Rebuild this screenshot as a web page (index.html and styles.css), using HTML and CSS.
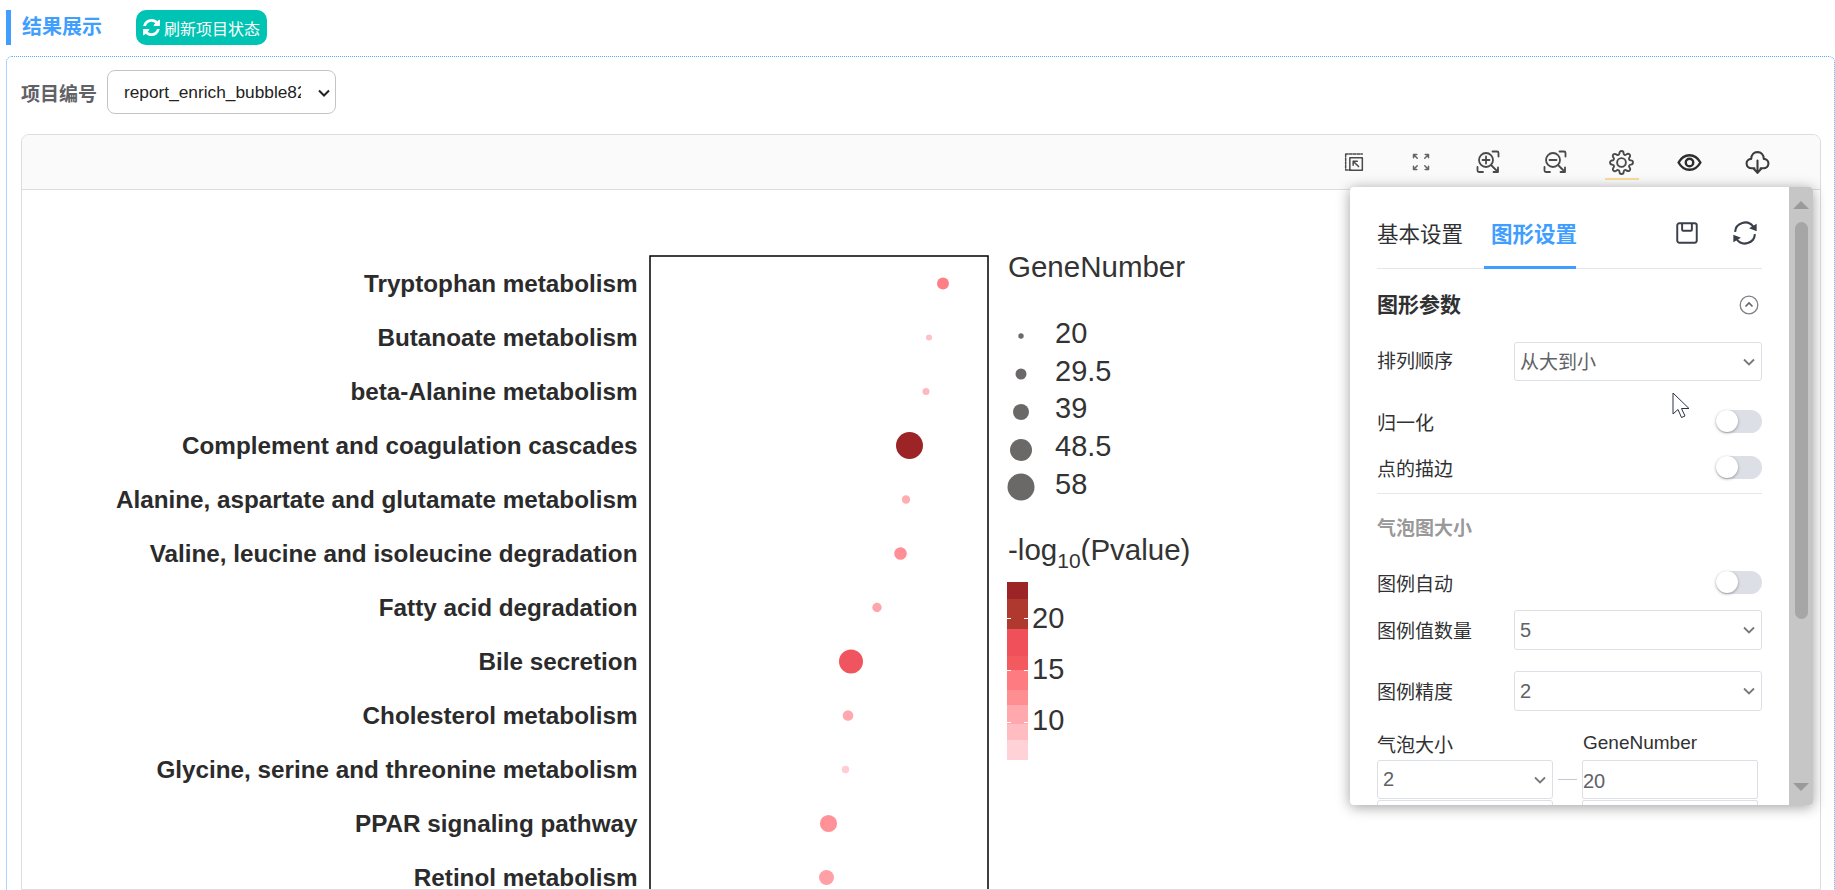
FILE: index.html
```html
<!DOCTYPE html>
<html lang="zh-CN">
<head>
<meta charset="utf-8">
<title>结果展示</title>
<link rel="stylesheet" href="styles.css">
</head>
<body>
<div class="page">
  <div class="title-row">
    <div class="title">结果展示</div>
    <button class="refresh">
      <svg class="refresh-icon" viewBox="0 0 1536 1536"><path fill="#fff" d="M1511 928q0 5-1 7-64 268-268 434.500t-478 166.500q-146 0-282.500-55t-243.500-157l-129 129q-19 19-45 19t-45-19-19-45v-448q0-26 19-45t45-19h448q26 0 45 19t19 45-19 45l-137 137q71 66 161 102t187 36q134 0 250-65t186-179q11-17 53-117 8-23 30-23h192q13 0 22.500 9.500t9.500 22.500zm25-800v448q0 26-19 45t-45 19h-448q-26 0-45-19t-19-45 19-45l138-138q-148-137-349-137-134 0-250 65t-186 179q-11 17-53 117-8 23-30 23h-199q-13 0-22.500-9.500t-9.500-22.500v-7q65-268 270-434.500t480-166.500q146 0 284 55.500t245 156.500l130-129q19-19 45-19t45 19 19 45z"/></svg>
      <span>刷新项目状态</span>
    </button>
  </div>

  <div class="panel">
    <div class="filter-row">
      <label class="filter-label">项目编号</label>
      <div class="filter-box">
        <select class="filter-select"><option>report_enrich_bubble82</option></select>
        <svg class="filter-chev" viewBox="0 0 12 8"><path d="M1 1.500l5 5 5-5"/></svg>
      </div>
    </div>

    <div class="card">
      <div class="toolbar">
        <div class="tool">
          <svg class="icon" viewBox="0 0 24 24"><path class="ln" stroke-dasharray="3 1.600" d="M2 2.500h20M2 2.500v19h6"/><path class="ln" d="M7 7h15v15H7z"/><path class="ln" d="M17.500 17.500L11 11M11 16v-5h5"/></svg>
        </div>
        <div class="tool">
          <svg class="icon" viewBox="0 0 24 24"><path class="ln-light" d="M3 3l4.500 4.500M3 7V3h4M21 3l-4.500 4.500M21 7V3h-4M3 21l4.500-4.500M3 17v4h4M21 21l-4.500-4.500M21 17v4h-4"/></svg>
        </div>
        <div class="tool">
          <svg class="icon icon-lg" viewBox="0 0 24 24"><circle class="ln" cx="10" cy="10" r="7"/><path class="ln" d="M10 6.500v7M6.500 10h7M15 15l7 7M22 17.500V22h-4.500M16.500 1.500H21a1.500 1.500 0 0 1 1.500 1.500v3.500M1.500 17v3.500A1.500 1.500 0 0 0 3 22h4"/></svg>
        </div>
        <div class="tool">
          <svg class="icon icon-lg" viewBox="0 0 24 24"><circle class="ln" cx="10" cy="10" r="7"/><path class="ln" d="M6.500 10h7M15 15l7 7M22 17.500V22h-4.500M16.500 1.500H21a1.500 1.500 0 0 1 1.500 1.500v3.500M1.500 17v3.500A1.500 1.500 0 0 0 3 22h4"/></svg>
        </div>
        <div class="tool tool-active">
          <svg class="icon icon-xl" viewBox="0 0 24 24"><circle class="ln" cx="12" cy="12" r="4.200"/><path class="ln" d="M19.400 15a1.650 1.650 0 0 0 .33 1.820l.06.06a2 2 0 0 1 0 2.830 2 2 0 0 1-2.830 0l-.06-.06a1.650 1.650 0 0 0-1.820-.33 1.650 1.650 0 0 0-1 1.510V21a2 2 0 0 1-2 2 2 2 0 0 1-2-2v-.09A1.650 1.650 0 0 0 9 19.400a1.650 1.650 0 0 0-1.820.33l-.06.06a2 2 0 0 1-2.830 0 2 2 0 0 1 0-2.830l.06-.06a1.650 1.650 0 0 0 .33-1.820 1.650 1.650 0 0 0-1.510-1H3a2 2 0 0 1-2-2 2 2 0 0 1 2-2h.09A1.650 1.650 0 0 0 4.600 9a1.650 1.650 0 0 0-.33-1.820l-.06-.06a2 2 0 0 1 0-2.830 2 2 0 0 1 2.830 0l.06.06a1.650 1.650 0 0 0 1.820.33H9a1.650 1.650 0 0 0 1-1.510V3a2 2 0 0 1 2-2 2 2 0 0 1 2 2v.09a1.650 1.650 0 0 0 1 1.510 1.650 1.650 0 0 0 1.820-.33l.06-.06a2 2 0 0 1 2.830 0 2 2 0 0 1 0 2.830l-.06.06a1.650 1.650 0 0 0-.33 1.820V9a1.650 1.650 0 0 0 1.510 1H21a2 2 0 0 1 2 2 2 2 0 0 1-2 2h-.09a1.650 1.650 0 0 0-1.510 1z"/></svg>
        </div>
        <div class="tool tool-wide">
          <svg class="icon icon-xl" viewBox="0 0 24 24"><path class="ln-bold" d="M1.500 12C4 7.500 7.500 5 12 5s8 2.500 10.500 7c-2.500 4.500-6 7-10.500 7S4 16.500 1.500 12z"/><circle class="ln-bold" cx="12" cy="12" r="3.600"/></svg>
        </div>
        <div class="tool tool-wide">
          <svg class="icon icon-xl" viewBox="0 0 24 24"><path class="ln-cloud" d="M9 17.500H6.500C3.500 17.500 1.500 15.500 1.500 13C1.500 10.500 3.500 8.500 6 8.500C6 4.500 8.500 2 12 2C15.500 2 18 4.500 18 8.500C20.500 8.500 22.500 10.500 22.500 13C22.500 15.500 20.500 17.500 17.500 17.500H15"/><path class="ln-cloud" d="M12 10v11.500M8.500 18l3.500 4 3.500-4"/></svg>
        </div>
      </div>

      <svg class="plot" viewBox="22 190 1798 699" xmlns="http://www.w3.org/2000/svg">
        <rect x="650" y="256" width="338" height="700" class="axes"/>
        <g class="term">
          <text x="637.500" y="292">Tryptophan metabolism</text>
          <text x="637.500" y="346">Butanoate metabolism</text>
          <text x="637.500" y="400">beta-Alanine metabolism</text>
          <text x="637.500" y="454">Complement and coagulation cascades</text>
          <text x="637.500" y="508">Alanine, aspartate and glutamate metabolism</text>
          <text x="637.500" y="562">Valine, leucine and isoleucine degradation</text>
          <text x="637.500" y="616">Fatty acid degradation</text>
          <text x="637.500" y="670">Bile secretion</text>
          <text x="637.500" y="724">Cholesterol metabolism</text>
          <text x="637.500" y="778">Glycine, serine and threonine metabolism</text>
          <text x="637.500" y="832">PPAR signaling pathway</text>
          <text x="637.500" y="886">Retinol metabolism</text>
        </g>
        <circle cx="943" cy="283.500" r="6" fill="#ff7f87"/>
        <circle cx="929" cy="337.500" r="3" fill="#ffc0c6"/>
        <circle cx="926" cy="391.500" r="3.500" fill="#ffb8be"/>
        <circle cx="909.500" cy="445.500" r="13.500" fill="#9c2426"/>
        <circle cx="906" cy="499.500" r="4.200" fill="#ffadb3"/>
        <circle cx="900.500" cy="553.500" r="6.300" fill="#ff8f96"/>
        <circle cx="877" cy="607.500" r="4.700" fill="#ffa6ac"/>
        <circle cx="851" cy="661.500" r="12" fill="#f0545e"/>
        <circle cx="848" cy="715.500" r="5.300" fill="#ffa9af"/>
        <circle cx="845.500" cy="769.500" r="3.700" fill="#ffcdd2"/>
        <circle cx="828.500" cy="823.500" r="8.600" fill="#ff9298"/>
        <circle cx="826.500" cy="877.500" r="7.500" fill="#ffa0a6"/>

        <text x="1008" y="277" class="legend-title">GeneNumber</text>
        <circle cx="1021" cy="336" r="2.700" class="size-dot"/>
        <circle cx="1021" cy="374" r="5.500" class="size-dot"/>
        <circle cx="1021" cy="412" r="8" class="size-dot"/>
        <circle cx="1021" cy="450" r="11" class="size-dot"/>
        <circle cx="1021" cy="487" r="13.500" class="size-dot"/>
        <text x="1055" y="343" class="legend-val">20</text>
        <text x="1055" y="381" class="legend-val">29.5</text>
        <text x="1055" y="418" class="legend-val">39</text>
        <text x="1055" y="456" class="legend-val">48.5</text>
        <text x="1055" y="494" class="legend-val">58</text>

        <text x="1008" y="560" class="legend-title">-log<tspan class="legend-sub" dy="8">10</tspan><tspan dy="-8">(Pvalue)</tspan></text>
        <g>
          <rect x="1007" y="582" width="21" height="18" fill="#9c2426"/>
          <rect x="1007" y="599" width="21" height="30" fill="#b0392f"/>
          <rect x="1007" y="629" width="21" height="27" fill="#ef5059"/>
          <rect x="1007" y="656" width="21" height="14" fill="#f25a60"/>
          <rect x="1007" y="670" width="21" height="20" fill="#ff7b82"/>
          <rect x="1007" y="690" width="21" height="15" fill="#ff8e93"/>
          <rect x="1007" y="705" width="21" height="19" fill="#ffa8ad"/>
          <rect x="1007" y="724" width="21" height="16" fill="#ffbcc1"/>
          <rect x="1007" y="740" width="21" height="20" fill="#ffd2d7"/>
          <path class="tick" d="M1007 618.500h4M1024 618.500h4M1007 670.500h4M1024 670.500h4M1007 722.500h4M1024 722.500h4"/>
        </g>
        <text x="1032" y="628" class="legend-val">20</text>
        <text x="1032" y="679" class="legend-val">15</text>
        <text x="1032" y="730" class="legend-val">10</text>
      </svg>
    </div>
  </div>

  <div class="popup">
    <div class="popup-body">
      <div class="tabs">
        <div class="tab">基本设置</div>
        <div class="tab tab-on">图形设置</div>
        <div class="tab-actions">
          <svg class="act-save" viewBox="0 0 24 24"><path class="ln-dark" d="M3 5a2 2 0 0 1 2-2h14a2 2 0 0 1 2 2v14a2 2 0 0 1-2 2H5a2 2 0 0 1-2-2z"/><path class="ln-dark" d="M7.500 3v6a1 1 0 0 0 1 1h7a1 1 0 0 0 1-1V3"/></svg>
          <svg class="act-sync" viewBox="0 0 24 24"><path class="ln-dark" d="M3.500 11a8.600 8.600 0 0 1 15.500-4.500M20.500 13a8.600 8.600 0 0 1-15.500 4.500"/><path class="fill-dark" d="M15.500 8l6.500 2.500V4zM8.500 16L2 13.500V20z"/></svg>
        </div>
      </div>

      <div class="section-head">
        <span class="section-title">图形参数</span>
        <svg class="section-chev" viewBox="0 0 20 20"><circle cx="10" cy="10" r="8.800" class="ln-gray"/><path d="M6.500 11.500L10 8l3.500 3.500" class="ln-gray2"/></svg>
      </div>

      <div class="row">
        <span class="row-label row-label-up">排列顺序</span>
        <div class="dd dd-grow"><span class="dd-up">从大到小</span><svg class="chev" viewBox="0 0 12 8"><path d="M1 1.500l5 5 5-5"/></svg></div>
      </div>

      <div class="row-toggle row-first">
        <span>归一化</span><span class="switch"><span class="knob"></span></span>
      </div>
      <div class="row-toggle">
        <span>点的描边</span><span class="switch"><span class="knob"></span></span>
      </div>
      <div class="divider"></div>
      <div class="subhead">气泡图大小</div>
      <div class="row-toggle row-auto">
        <span>图例自动</span><span class="switch"><span class="knob"></span></span>
      </div>
      <div class="row row-count">
        <span class="row-label">图例值数量</span>
        <div class="dd dd-grow dd-tall"><span class="num">5</span><svg class="chev" viewBox="0 0 12 8"><path d="M1 1.500l5 5 5-5"/></svg></div>
      </div>
      <div class="row row-prec">
        <span class="row-label">图例精度</span>
        <div class="dd dd-grow dd-tall"><span class="num">2</span><svg class="chev" viewBox="0 0 12 8"><path d="M1 1.500l5 5 5-5"/></svg></div>
      </div>
      <div class="range-head">
        <span class="range-name">气泡大小</span><span class="num-label">GeneNumber</span>
      </div>
      <div class="range-row">
        <div class="dd dd-small"><span class="num">2</span><svg class="chev" viewBox="0 0 12 8"><path d="M1 1.500l5 5 5-5"/></svg></div>
        <span class="range-dash"></span>
        <div class="inp"><span class="num">20</span></div>
      </div>
      <div class="range-row range-next">
        <div class="dd dd-small"></div>
        <span class="range-gap"></span>
        <div class="inp"></div>
      </div>
    </div>
    <div class="scrollbar">
      <span class="arrow-up"></span>
      <span class="thumb"></span>
      <span class="arrow-down"></span>
    </div>
  </div>

  <svg class="cursor" viewBox="0 0 18 27"><path d="M1 1v21l5-4.500 3.500 8 3.500-1.500-3.500-7.500h7.500z" fill="#fff" stroke="#2c3146" stroke-width="1"/></svg>
</div>
</body>
</html>
```

FILE: styles.css
```css
* { box-sizing: border-box; }
html, body { margin: 0; padding: 0; background: #fff; }
body {
  font-family: "Liberation Sans", "Noto Sans CJK SC", sans-serif;
  color: #303133;
}
.page { position: relative; width: 1835px; height: 890px; overflow: hidden; }

.title-row { display: flex; padding: 10px 0 0 6px; margin-bottom: 11px; height: 45px; }
.title {
  border-left: 5px solid #409eff;
  padding-left: 11px;
  height: 35px;
  line-height: 35px;
  font-size: 20px;
  font-weight: 700;
  color: #409eff;
}
.refresh {
  display: flex;
  align-items: center;
  gap: 4px;
  width: 131px;
  height: 35px;
  margin-left: 34px;
  padding: 0 0 0 7px;
  border: 0;
  border-radius: 10px;
  background: #00c4b3;
  color: #fff;
  font: 16px "Liberation Sans", "Noto Sans CJK SC", sans-serif;
  white-space: nowrap;
}
.refresh-icon { width: 17px; height: 17px; flex: none; }

.panel {
  margin: 0 0 0 6px;
  height: 840px;
  padding: 13px 13px 0 14px;
  border: 1px dotted #57aafc;
  border-radius: 6px;
}
.filter-row { display: flex; align-items: center; height: 44px; margin-bottom: 20px; }
.filter-label {
  flex: none;
  width: 75px;
  margin-right: 11px;
  font-size: 19px;
  font-weight: 700;
  color: #606266;
  white-space: nowrap;
}
.filter-box { position: relative; width: 229px; height: 44px; flex: none; }
.filter-select {
  display: block;
  width: 229px;
  height: 44px;
  padding: 0 34px 0 16px;
  appearance: none;
  border: 1px solid #c4c4c4;
  border-radius: 8px;
  background: #fff;
  color: #222;
  font: 17.300px "Liberation Sans", sans-serif;
}
.filter-chev { position: absolute; right: 6px; top: 19px; width: 12px; height: 8px; pointer-events: none; }
.filter-chev path { fill: none; stroke: #222; stroke-width: 2; }

.card {
  height: 756px;
  border: 1px solid #ddd;
  border-radius: 8px 8px 0 0;
  overflow: hidden;
}
.toolbar {
  display: flex;
  justify-content: flex-end;
  height: 55px;
  padding-right: 29px;
  background: #fafafa;
  border-bottom: 1px solid #ddd;
}
.tool {
  position: relative;
  display: flex;
  align-items: center;
  justify-content: center;
  width: 67px;
  height: 54px;
}
.tool-wide { width: 68px; }
.tool-active::after {
  content: "";
  position: absolute;
  left: 17px;
  bottom: 9px;
  width: 34px;
  height: 2px;
  background: #fbdc9a;
}
.icon { width: 20px; height: 20px; }
.icon-lg { width: 24px; height: 24px; }
.icon-xl { width: 25px; height: 25px; }
.ln { fill: none; stroke: #4a4a4a; stroke-width: 1.800; stroke-linecap: round; stroke-linejoin: round; }
.ln-light { fill: none; stroke: #666; stroke-width: 1.800; stroke-linecap: round; stroke-linejoin: round; }
.ln-bold { fill: none; stroke: #2e2e2e; stroke-width: 2.300; stroke-linecap: round; stroke-linejoin: round; }
.ln-cloud { fill: none; stroke: #3c3c3c; stroke-width: 2; stroke-linecap: round; stroke-linejoin: round; }

.plot { display: block; width: 1798px; height: 699px; }
.axes { fill: #fff; stroke: #000; stroke-width: 1.500; }
.term text {
  font-family: "Liberation Sans", sans-serif;
  font-size: 24.250px;
  font-weight: 700;
  fill: #2b2b2b;
  text-anchor: end;
}
.legend-title { font-family: "Liberation Sans", sans-serif; font-size: 29.500px; fill: #333; }
.legend-sub { font-size: 21px; }
.legend-val { font-family: "Liberation Sans", sans-serif; font-size: 29px; fill: #333; }
.size-dot { fill: #6b6968; }
.tick { stroke: #fff; stroke-width: 1; fill: none; }

.popup {
  position: absolute;
  left: 1350px;
  top: 187px;
  display: flex;
  width: 463px;
  height: 618px;
  background: #fff;
  border-radius: 4px;
  box-shadow: 0 2px 14px rgba(0, 0, 0, .38);
  overflow: hidden;
  font-size: 19px;
  font-family: "Noto Sans CJK SC", "Liberation Sans", sans-serif;
}
.popup-body { width: 439px; padding-left: 27px; padding-right: 27px; overflow: hidden; }
.tabs { display: flex; height: 82px; border-bottom: 1px solid #e4e7ed; }
.tab {
  height: 82px;
  padding-top: 31px;
  font-size: 21.500px;
  line-height: 30px;
  white-space: nowrap;
  color: #303133;
  width: 107px;
}
.tab-on {
  width: 92px;
  padding-left: 7px;
  color: #409eff;
  font-weight: 700;
  border-bottom: 3px solid #409eff;
}
.tab-actions { display: flex; align-items: center; gap: 31px; margin-left: auto; height: 38px; margin-top: 27px; padding-right: 3px; }
.act-save { width: 26px; height: 26px; }
.act-sync { width: 28px; height: 28px; }
.ln-dark { fill: none; stroke: #3a3f4a; stroke-width: 1.800; stroke-linejoin: round; }
.fill-dark { fill: #3a3f4a; }

.section-head {
  display: flex;
  align-items: center;
  justify-content: space-between;
  height: 73px;
  padding: 0 3px 2px 0;
}
.section-title { font-size: 21px; font-weight: 700; margin-bottom: 4px; }
.section-chev { width: 20px; height: 20px; }
.ln-gray { fill: none; stroke: #7d8186; stroke-width: 1.300; }
.ln-gray2 { fill: none; stroke: #5f6368; stroke-width: 1.600; }

.row { display: flex; align-items: center; }
.row-label { width: 137px; flex: none; line-height: 26px; }
.row-label-up { margin-bottom: 4px; }
.row-count { margin-top: 6px; }
.row-prec { margin-top: 21px; }
.dd {
  display: flex;
  align-items: center;
  justify-content: space-between;
  height: 39px;
  padding: 0 6px 0 5px;
  border: 1px solid #dcdfe6;
  border-radius: 3px;
  color: #606266;
}
.dd-up { margin-bottom: 3px; }
.dd-tall { height: 40px; }
.dd-grow { flex: 1; }
.dd-small { width: 176px; flex: none; }
.num { font-family: "Liberation Sans", sans-serif; font-size: 20px; }
.chev { width: 12px; height: 8px; }
.chev path { fill: none; stroke: #75787d; stroke-width: 1.800; }

.row-toggle { display: flex; align-items: center; justify-content: space-between; height: 46px; }
.row-first { margin-top: 17px; }
.row-auto { height: 44px; }
.switch { display: block; width: 46px; height: 23px; background: #dcdfe6; border-radius: 12px; }
.knob {
  display: block;
  width: 22px;
  height: 22px;
  background: #fff;
  border-radius: 50%;
  box-shadow: 0 1px 3px rgba(0, 0, 0, .35);
}
.divider { height: 1px; margin-top: 3px; background: #e4e7ed; }
.subhead { height: 66px; line-height: 66px; font-weight: 700; color: #999; }

.range-head { display: flex; align-items: center; height: 28px; margin-top: 18px; }
.range-name { width: 206px; flex: none; }
.num-label { font-family: "Liberation Sans", sans-serif; font-size: 19px; }
.range-row { display: flex; align-items: center; margin-top: 3px; }
.range-next { margin-top: 1px; }
.range-dash { width: 19px; height: 1px; margin: 0 5px; background: #c8c9cc; flex: none; }
.range-gap { width: 29px; flex: none; }
.inp {
  width: 176px;
  height: 39px;
  flex: none;
  line-height: 37px;
  padding-left: 0;
  border: 1px solid #dcdfe6;
  border-radius: 2px;
  color: #606266;
}

.scrollbar { display: flex; flex-direction: column; align-items: center; width: 24px; background: #c6c6c6; }
.arrow-up, .arrow-down { width: 0; height: 0; border-left: 8px solid transparent; border-right: 8px solid transparent; }
.arrow-up { margin-top: 14px; border-bottom: 8px solid #9a9a9a; }
.arrow-down { margin-top: auto; margin-bottom: 14px; border-top: 8px solid #9a9a9a; }
.thumb { width: 13px; height: 397px; margin-top: 13px; background: #a6a6a6; border-radius: 7px; }

.cursor { position: absolute; left: 1672px; top: 392px; width: 18px; height: 27px; }
```
